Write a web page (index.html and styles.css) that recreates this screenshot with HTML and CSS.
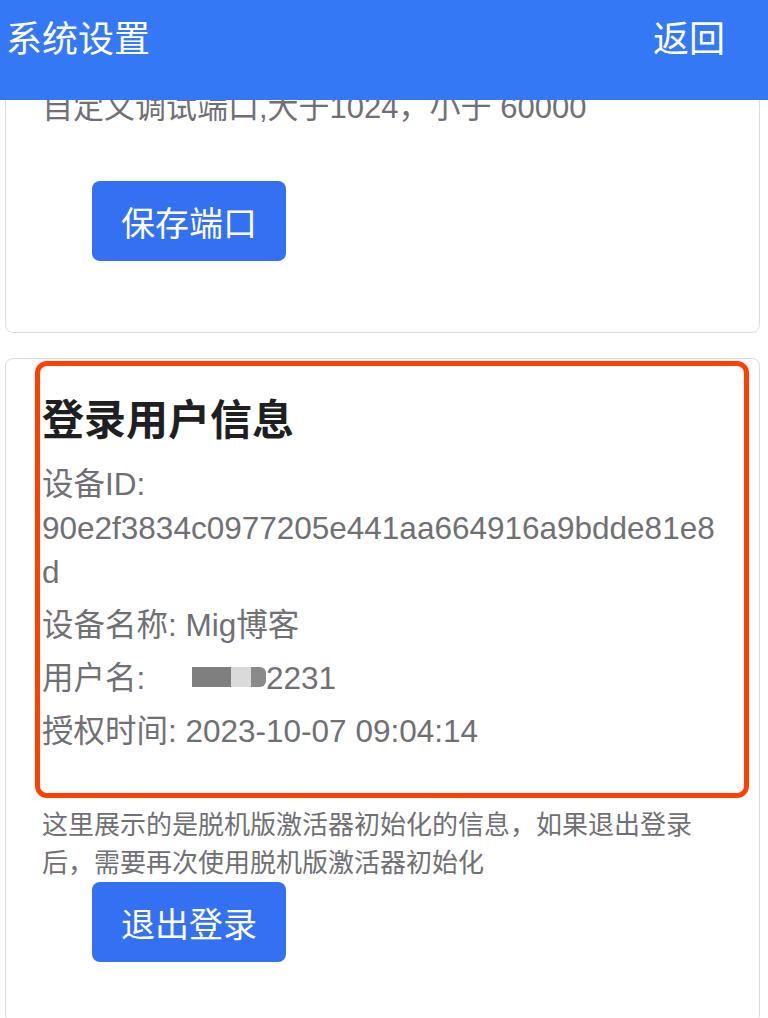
FILE: index.html
```html
<!DOCTYPE html>
<html lang="zh-CN">
<head>
<meta charset="utf-8">
<title>系统设置</title>
<link rel="stylesheet" href="styles.css">
</head>
<body>
<div class="page">
  <header class="topbar">
    <span class="topbar-title">系统设置</span>
    <span class="topbar-back">返回</span>
  </header>
  <main class="content">
    <section class="card card-port">
      <p class="hint-lg">自定义调试端口,大于1024，小于 60000</p>
      <button class="btn">保存端口</button>
    </section>
    <section class="card card-user">
      <div class="highlight">
        <h2 class="card-title">登录用户信息</h2>
        <p class="info">设备ID: 90e2f3834c0977205e441aa664916a9bdde81e8d</p>
        <p class="info">设备名称: Mig博客</p>
        <p class="info">用户名: <span class="blur"><span class="blur-a"></span><span class="blur-b"></span><span class="blur-c"></span></span>2231</p>
        <p class="info">授权时间: 2023-10-07 09:04:14</p>
      </div>
      <p class="hint-sm">这里展示的是脱机版激活器初始化的信息，如果退出登录后，需要再次使用脱机版激活器初始化</p>
      <button class="btn">退出登录</button>
    </section>
  </main>
</div>
</body>
</html>
```

FILE: styles.css
```css
* { box-sizing: border-box; }
html, body { margin: 0; padding: 0; background: #ffffff; }
body {
  font-family: "Liberation Sans", "Noto Sans CJK SC", sans-serif;
}
.page {
  width: 768px;
  height: 1018px;
  overflow: hidden;
  background: #ffffff;
}
.topbar {
  position: relative;
  z-index: 2;
  height: 100px;
  background: #3478f6;
  color: #ffffff;
  display: flex;
  justify-content: space-between;
  align-items: flex-start;
  padding: 12px 43px 0 6px;
  font-family: "Noto Sans CJK SC", sans-serif;
  font-size: 36px;
  line-height: 48px;
}
.content {
  margin-top: -40px;
  padding: 0 8px 0 5px;
}
.card {
  border: 1px solid #dcdcdc;
  border-radius: 8px;
  background: #ffffff;
  padding: 0 37px 0 36px;
}
.card-port {
  padding-top: 25px;
  padding-bottom: 71px;
}
.hint-lg {
  margin: 0;
  font-size: 31px;
  line-height: 44px;
  color: #707074;
}
.btn {
  display: block;
  width: 194px;
  height: 80px;
  margin: 51px 0 0 50px;
  border: none;
  border-radius: 8px;
  background: #3371f2;
  color: #ffffff;
  font-family: "Noto Sans CJK SC", sans-serif;
  font-size: 34px;
  padding: 0;
}
.card-user {
  margin-top: 25px;
  padding-top: 2px;
  padding-bottom: 60px;
}
.highlight {
  margin: 0 -27px 0 -7px;
  border: 5px solid #ff4000;
  border-radius: 12px;
  padding: 26px 21px 40px 2px;
}
.card-title {
  margin: 0 0 20px;
  font-family: "Noto Sans CJK SC", sans-serif;
  font-size: 42px;
  line-height: 50px;
  font-weight: 700;
  color: #1f1f22;
}
.info {
  margin: 0 0 9px;
  font-size: 31.5px;
  line-height: 44px;
  color: #707074;
  overflow-wrap: break-word;
}
.info:last-child { margin-bottom: 0; }
.blur {
  display: inline-flex;
  vertical-align: 2px;
  margin-left: 38px;
  height: 20px;
}
.blur-a { width: 39px; background: #7f7f80; }
.blur-b { width: 20px; background: #dadadb; }
.blur-c { width: 15px; background: #8a8a8b; border-radius: 0 6px 6px 0; }
.hint-sm {
  margin: 8px 10px 0 0;
  font-size: 26px;
  line-height: 38px;
  color: #707074;
}
.card-user .btn { margin-top: 0; }
```
